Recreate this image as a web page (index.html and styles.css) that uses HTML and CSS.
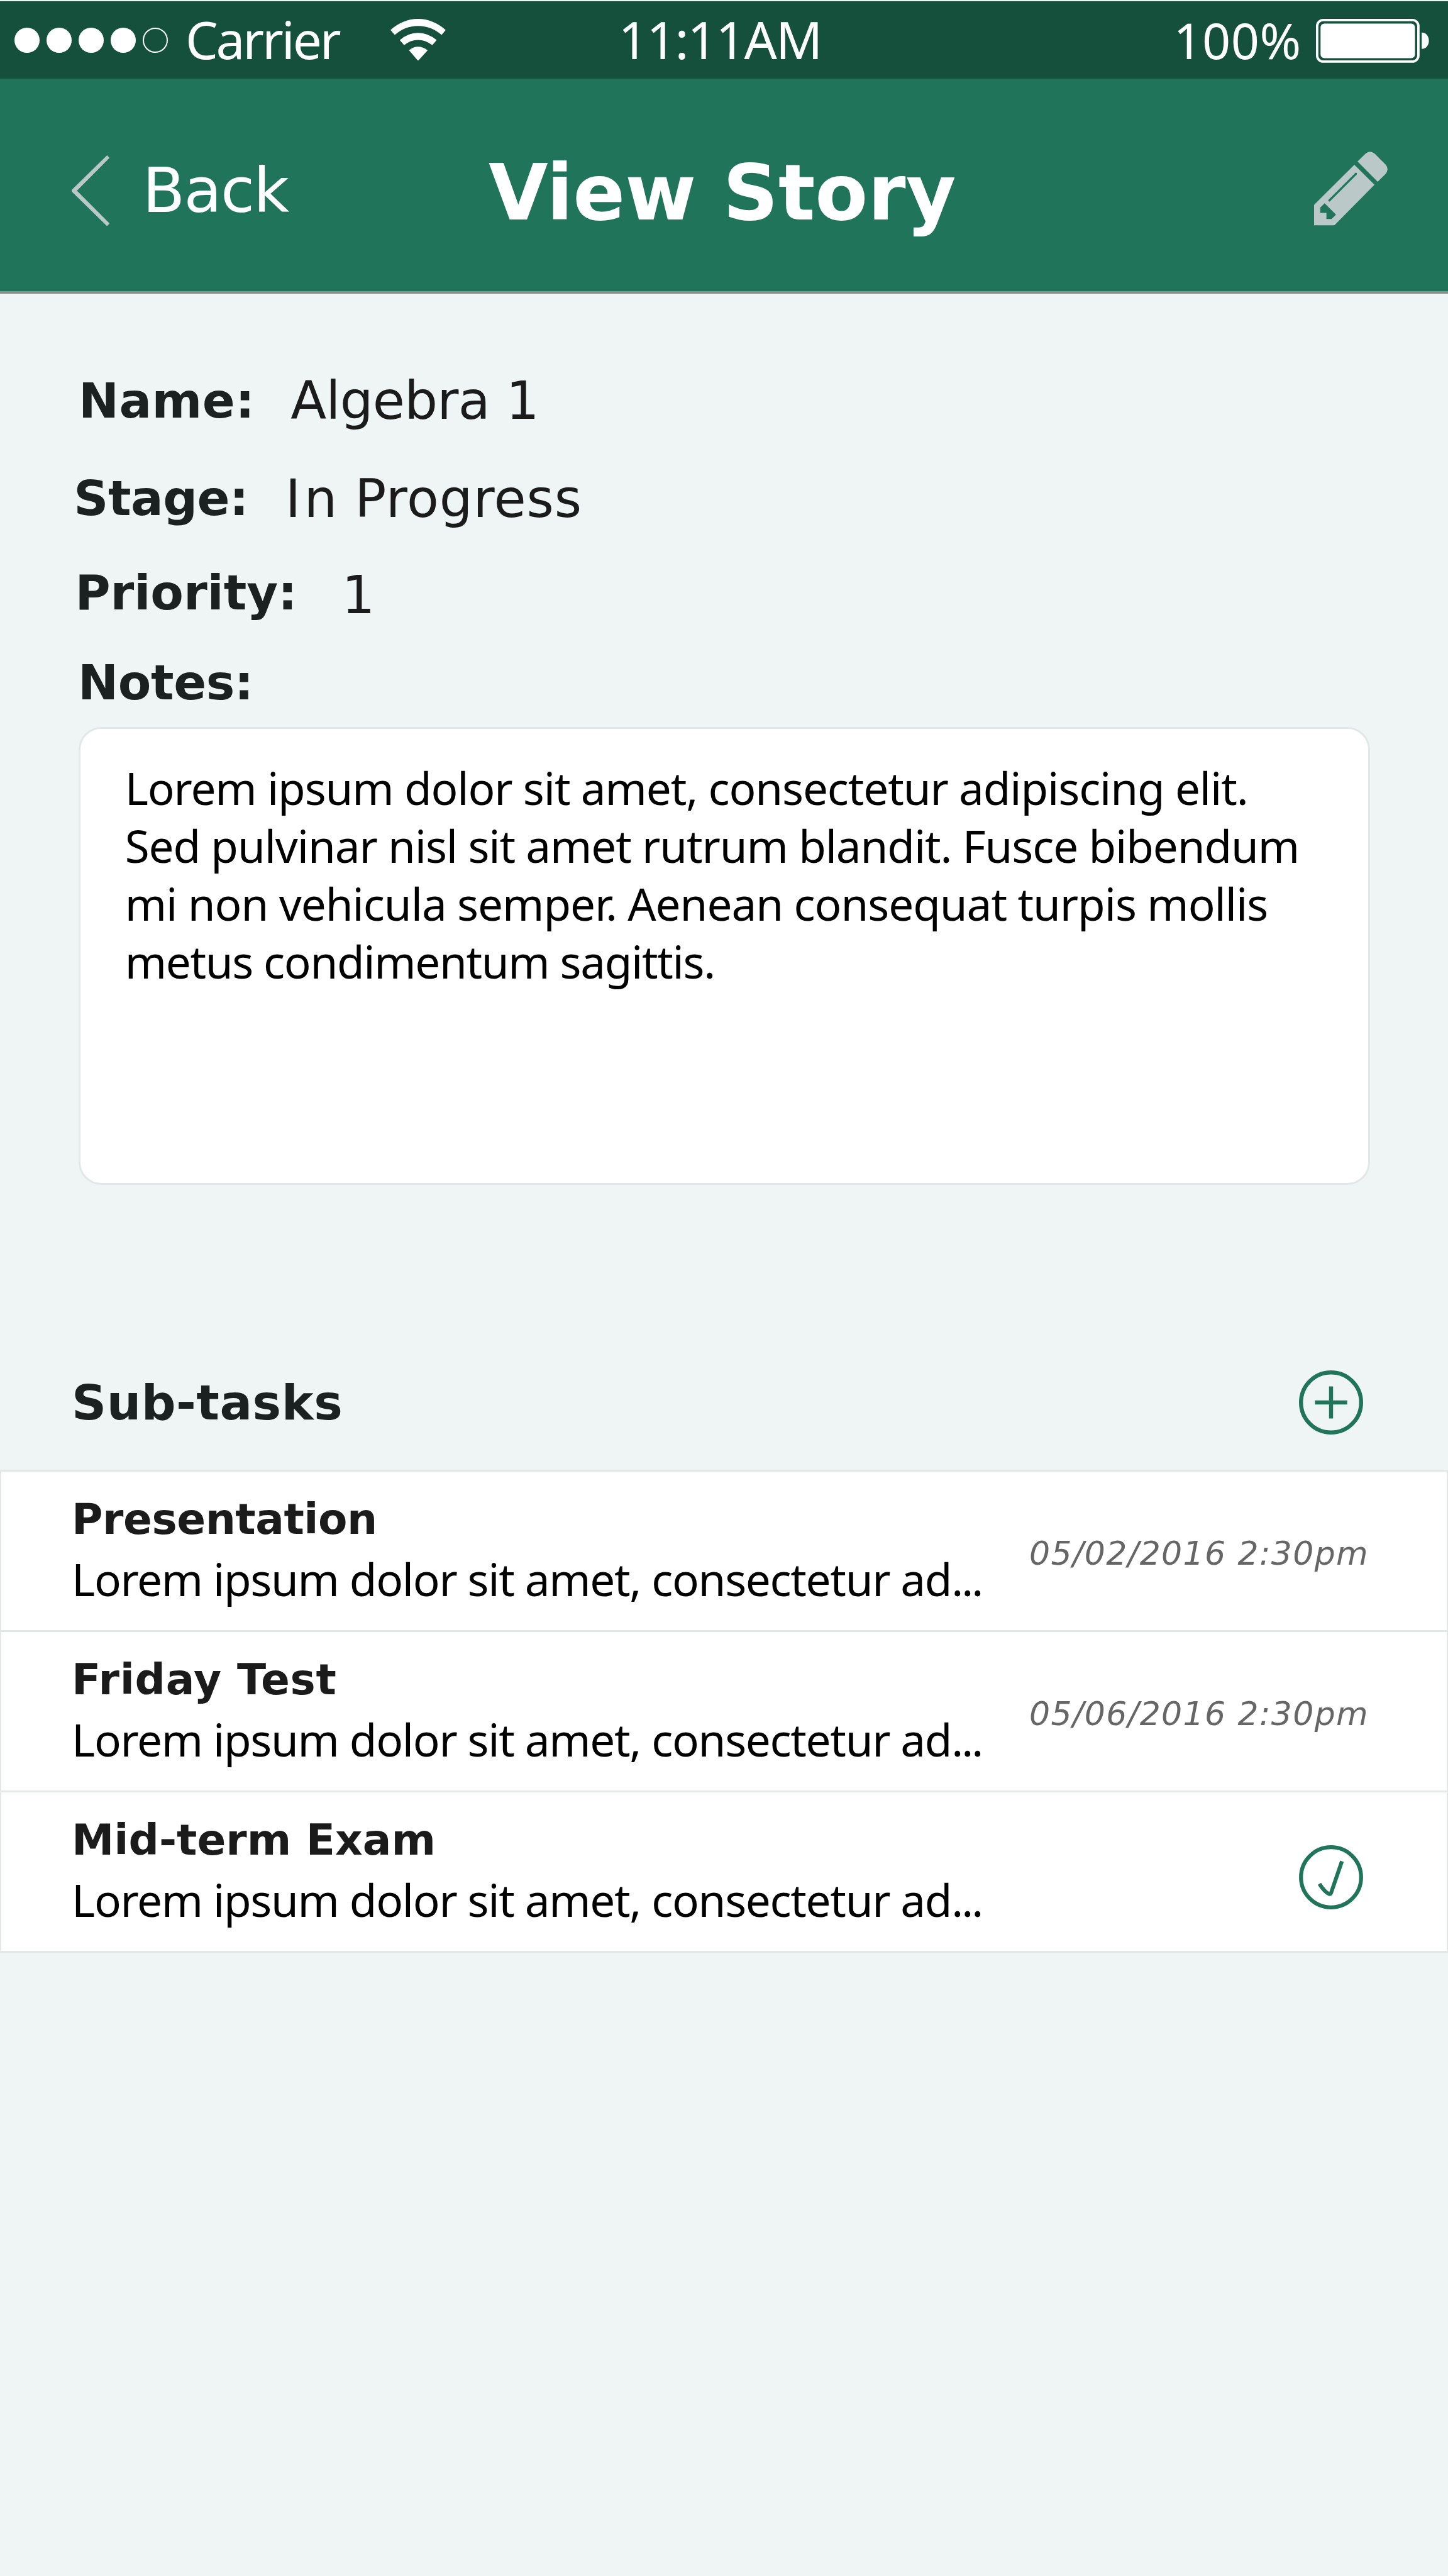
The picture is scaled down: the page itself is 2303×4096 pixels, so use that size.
FILE: index.html
```html
<!DOCTYPE html>
<html lang="en">
<head>
<meta charset="utf-8">
<title>View Story</title>
<link rel="stylesheet" href="styles.css">
</head>
<body>
<div class="status-bar">
  <div class="signal"><i class="dot"></i><i class="dot"></i><i class="dot"></i><i class="dot"></i><i class="dot dot-empty"></i></div>
  <span class="carrier">Carrier</span>
  <svg class="wifi" viewBox="1259 96 179 215" preserveAspectRatio="none" fill="#fff">
    <path d="M1259 153Q1300 96 1348 96T1437 153L1424 178Q1390 132 1348 132T1273 178Z"/>
    <path d="M1289 205Q1316 168 1348 168T1408 205L1394 231Q1372 204 1348 204T1303 231Z"/>
    <path d="M1319 257Q1332 239 1348 239T1379 257L1348 311Z"/>
  </svg>
  <span class="time">11:11AM</span>
  <span class="percent">100%</span>
  <svg class="battery" viewBox="0 0 179.6 69.8" fill="#fff">
    <rect x="1.9" y="1.9" width="161" height="66" rx="9.5" fill="none" stroke="#fff" stroke-width="3.8"/>
    <rect x="7.3" y="7.4" width="150.2" height="55" rx="6"/>
    <path d="M168.2 21.7C175.6 21.7 179.6 28 179.6 34.8S175.6 47.8 168.2 47.8Z"/>
  </svg>
</div>

<header class="nav">
  <a class="back">
    <svg class="chevron" viewBox="230 795 122 363" preserveAspectRatio="none" fill="#bac8c7"><path d="M344 795L352 808 247 976 352 1144 344 1158 230 980V972Z"/></svg>
    <span>Back</span>
  </a>
  <h1 class="title">View Story</h1>
  <svg class="pencil" viewBox="897 778 369 378" preserveAspectRatio="none" fill="#bac8c7">
    <path d="M1115 829L1156 788Q1177 770 1200 788L1256 845Q1275 868 1256 892L1216 933Z"/>
    <path fill-rule="evenodd" d="M1099 846L1200 948 999 1156H897V1051ZM950 1043L928 1065V1092H959V1124H985L1007 1101Z"/>
    <path d="M974 1028L1107 892" stroke="#20745a" stroke-width="11" stroke-linecap="round"/>
  </svg>
</header>

<main>
  <section class="story">
    <div class="field field-name"><span class="label">Name:</span><span class="value">Algebra 1</span></div>
    <div class="field field-stage"><span class="label">Stage:</span><span class="value"><span class="cap-i">I</span>n Progress</span></div>
    <div class="field field-priority"><span class="label">Priority:</span><span class="value">1</span></div>
    <div class="field field-notes"><span class="label">Notes:</span></div>
    <div class="notes">
      <p>Lorem ipsum dolor sit amet, consectetur adipiscing elit.</p>
      <p>Sed pulvinar nisl sit amet rutrum blandit. Fusce bibendum</p>
      <p>mi non vehicula semper. Aenean consequat turpis mollis</p>
      <p>metus condimentum sagittis.</p>
    </div>
  </section>

  <div class="subtasks-head">
    <h2>Sub-tasks</h2>
    <svg class="round-icon" viewBox="0 0 102 102" fill="none" stroke="#20745a" stroke-width="6.4"><circle cx="51" cy="51" r="47.8"/><path d="M25.4 51H76.6M51 25.6V76.4"/></svg>
  </div>
  <ul class="subtasks">
    <li>
      <div class="task"><h3>Presentation</h3><p>Lorem ipsum dolor sit amet, consectetur ad<span class="dots">...</span></p></div>
      <time>05/02/2016 2:30pm</time>
    </li>
    <li>
      <div class="task"><h3>Friday Test</h3><p>Lorem ipsum dolor sit amet, consectetur ad<span class="dots">...</span></p></div>
      <time>05/06/2016 2:30pm</time>
    </li>
    <li>
      <div class="task"><h3>Mid-term Exam</h3><p>Lorem ipsum dolor sit amet, consectetur ad<span class="dots">...</span></p></div>
      <svg class="round-icon done" viewBox="0 0 102 102" fill="none" stroke="#20745a" stroke-width="6.2"><circle cx="51" cy="51" r="47.8"/><path d="M32.5 61.3C37 68.5 42.5 75 47.5 77.3Q50.5 78.5 51.3 75L68.3 25.6"/></svg>
    </li>
  </ul>
</main>
</body>
</html>
```
FILE: styles.css
```css
* { box-sizing: border-box; margin: 0; padding: 0; }

body {
  width: 2303px;
  min-height: 4096px;
  background: #eff5f5;
  color: #1b1b1b;
  font-family: "DejaVu Sans", Verdana, sans-serif;
  white-space: nowrap;
}

svg { display: block; flex: none; }

/* Status bar */
.status-bar {
  display: flex;
  height: 125px;
  padding: 0 30px 0 22.7px;
  border-top: 2px solid #eff5f5;
  background: #14503b;
  color: #fff;
  font: 82px/121px "Noto Sans", sans-serif;
}
.signal { display: flex; gap: 11.2px; margin: 42.4px 26.5px 0 0; }
.dot { width: 40px; height: 40px; border-radius: 50%; background: #fff; }
.dot-empty { background: none; border: 2px solid #fff; }
.carrier { width: 327.3px; padding-left: 1px; letter-spacing: -3.2px; }
.wifi { width: 88.3px; height: 66.7px; margin-top: 27.8px; }
.time { margin-left: 274px; letter-spacing: -1.9px; }
.percent { width: 227px; margin-left: auto; font-size: 79px; line-height: 123px; letter-spacing: 0.5px; }
.battery { width: 179.6px; height: 69.8px; margin-top: 27.8px; }

/* Navigation bar */
.nav {
  display: flex;
  align-items: center;
  height: 342px;
  padding: 18px 95.8px 0 113.5px;
  border-bottom: 4px solid #8a8f8e;
  background: #20745a;
  color: #fff;
}
.back { display: flex; align-items: center; gap: 53px; width: 663.4px; font-size: 98.4px; letter-spacing: -1.77px; }
.chevron { width: 60.2px; height: 112.6px; }
.title { margin-top: 7px; font-size: 122.3px; font-weight: bold; }
.pencil { width: 117px; height: 117.3px; margin: 0 0 6px auto; }

/* Story details */
.story { padding: 121px 124.4px 0 0; }
.field { display: flex; line-height: 100px; }
.label { color: #1b2020; font-size: 76.6px; font-weight: bold; }
.value { font-size: 83.2px; }
.field-name { height: 155px; padding-left: 125px; }
.field-name .label { width: 337.2px; letter-spacing: 0.4px; }
.field-name .value { letter-spacing: -0.73px; }
.field-stage { height: 150px; padding-left: 117.3px; }
.field-stage .label { width: 336.5px; letter-spacing: -0.5px; }
.field-stage .value { margin-top: 1px; letter-spacing: 0.82px; }
.field-stage .cap-i { letter-spacing: 5.2px; }
.field-priority { height: 143px; padding-left: 119.5px; }
.field-priority .label { width: 424px; letter-spacing: -0.1px; }
.field-priority .value { margin-top: 4px; }
.field-notes { height: 120px; padding-left: 124px; }
.field-notes .label { letter-spacing: -0.4px; }

.notes {
  height: 727.7px;
  margin-left: 124.7px;
  padding: 47.7px 0 0 71px;
  border: 3px solid #e1e8e7;
  border-radius: 36px;
  background: #fff;
  color: #000;
  font: 71px/92.15px "Noto Sans", sans-serif;
  letter-spacing: -1.12px;
}
.notes p:nth-child(3) { letter-spacing: -1.05px; }
.notes p:nth-child(4) { letter-spacing: -1.34px; }

/* Sub-tasks */
.subtasks-head {
  display: flex;
  align-items: center;
  justify-content: space-between;
  height: 215px;
  margin-top: 238.6px;
  padding: 0 135.2px 0 114px;
}
.subtasks-head h2 { padding-top: 2.4px; color: #1b2020; font-size: 76.6px; letter-spacing: 0.5px; }
.round-icon { width: 102px; height: 102px; }

.subtasks { list-style: none; border: solid #e1e8e7; border-width: 0 2px 3px; background: #fff; }
.subtasks li {
  display: flex;
  align-items: center;
  height: 255px;
  padding: 0 133.2px 0 112px;
  border-top: 3px solid #e1e8e7;
}
.task { flex: none; align-self: flex-start; width: 1523px; padding-top: 31px; }
.task h3 { font-size: 67.7px; line-height: 90px; }
li:nth-child(1) h3 { letter-spacing: -0.49px; }
li:nth-child(2) h3 { letter-spacing: 0.7px; }
.task p { color: #000; font: 71px/100px "Noto Sans", sans-serif; letter-spacing: -1.32px; }
.task .dots { letter-spacing: -3px; }
.subtasks time { margin-top: 7.4px; color: #666; font-size: 52px; font-style: italic; letter-spacing: 1.38px; }
.done { margin: 17px 0 0 auto; }
```
